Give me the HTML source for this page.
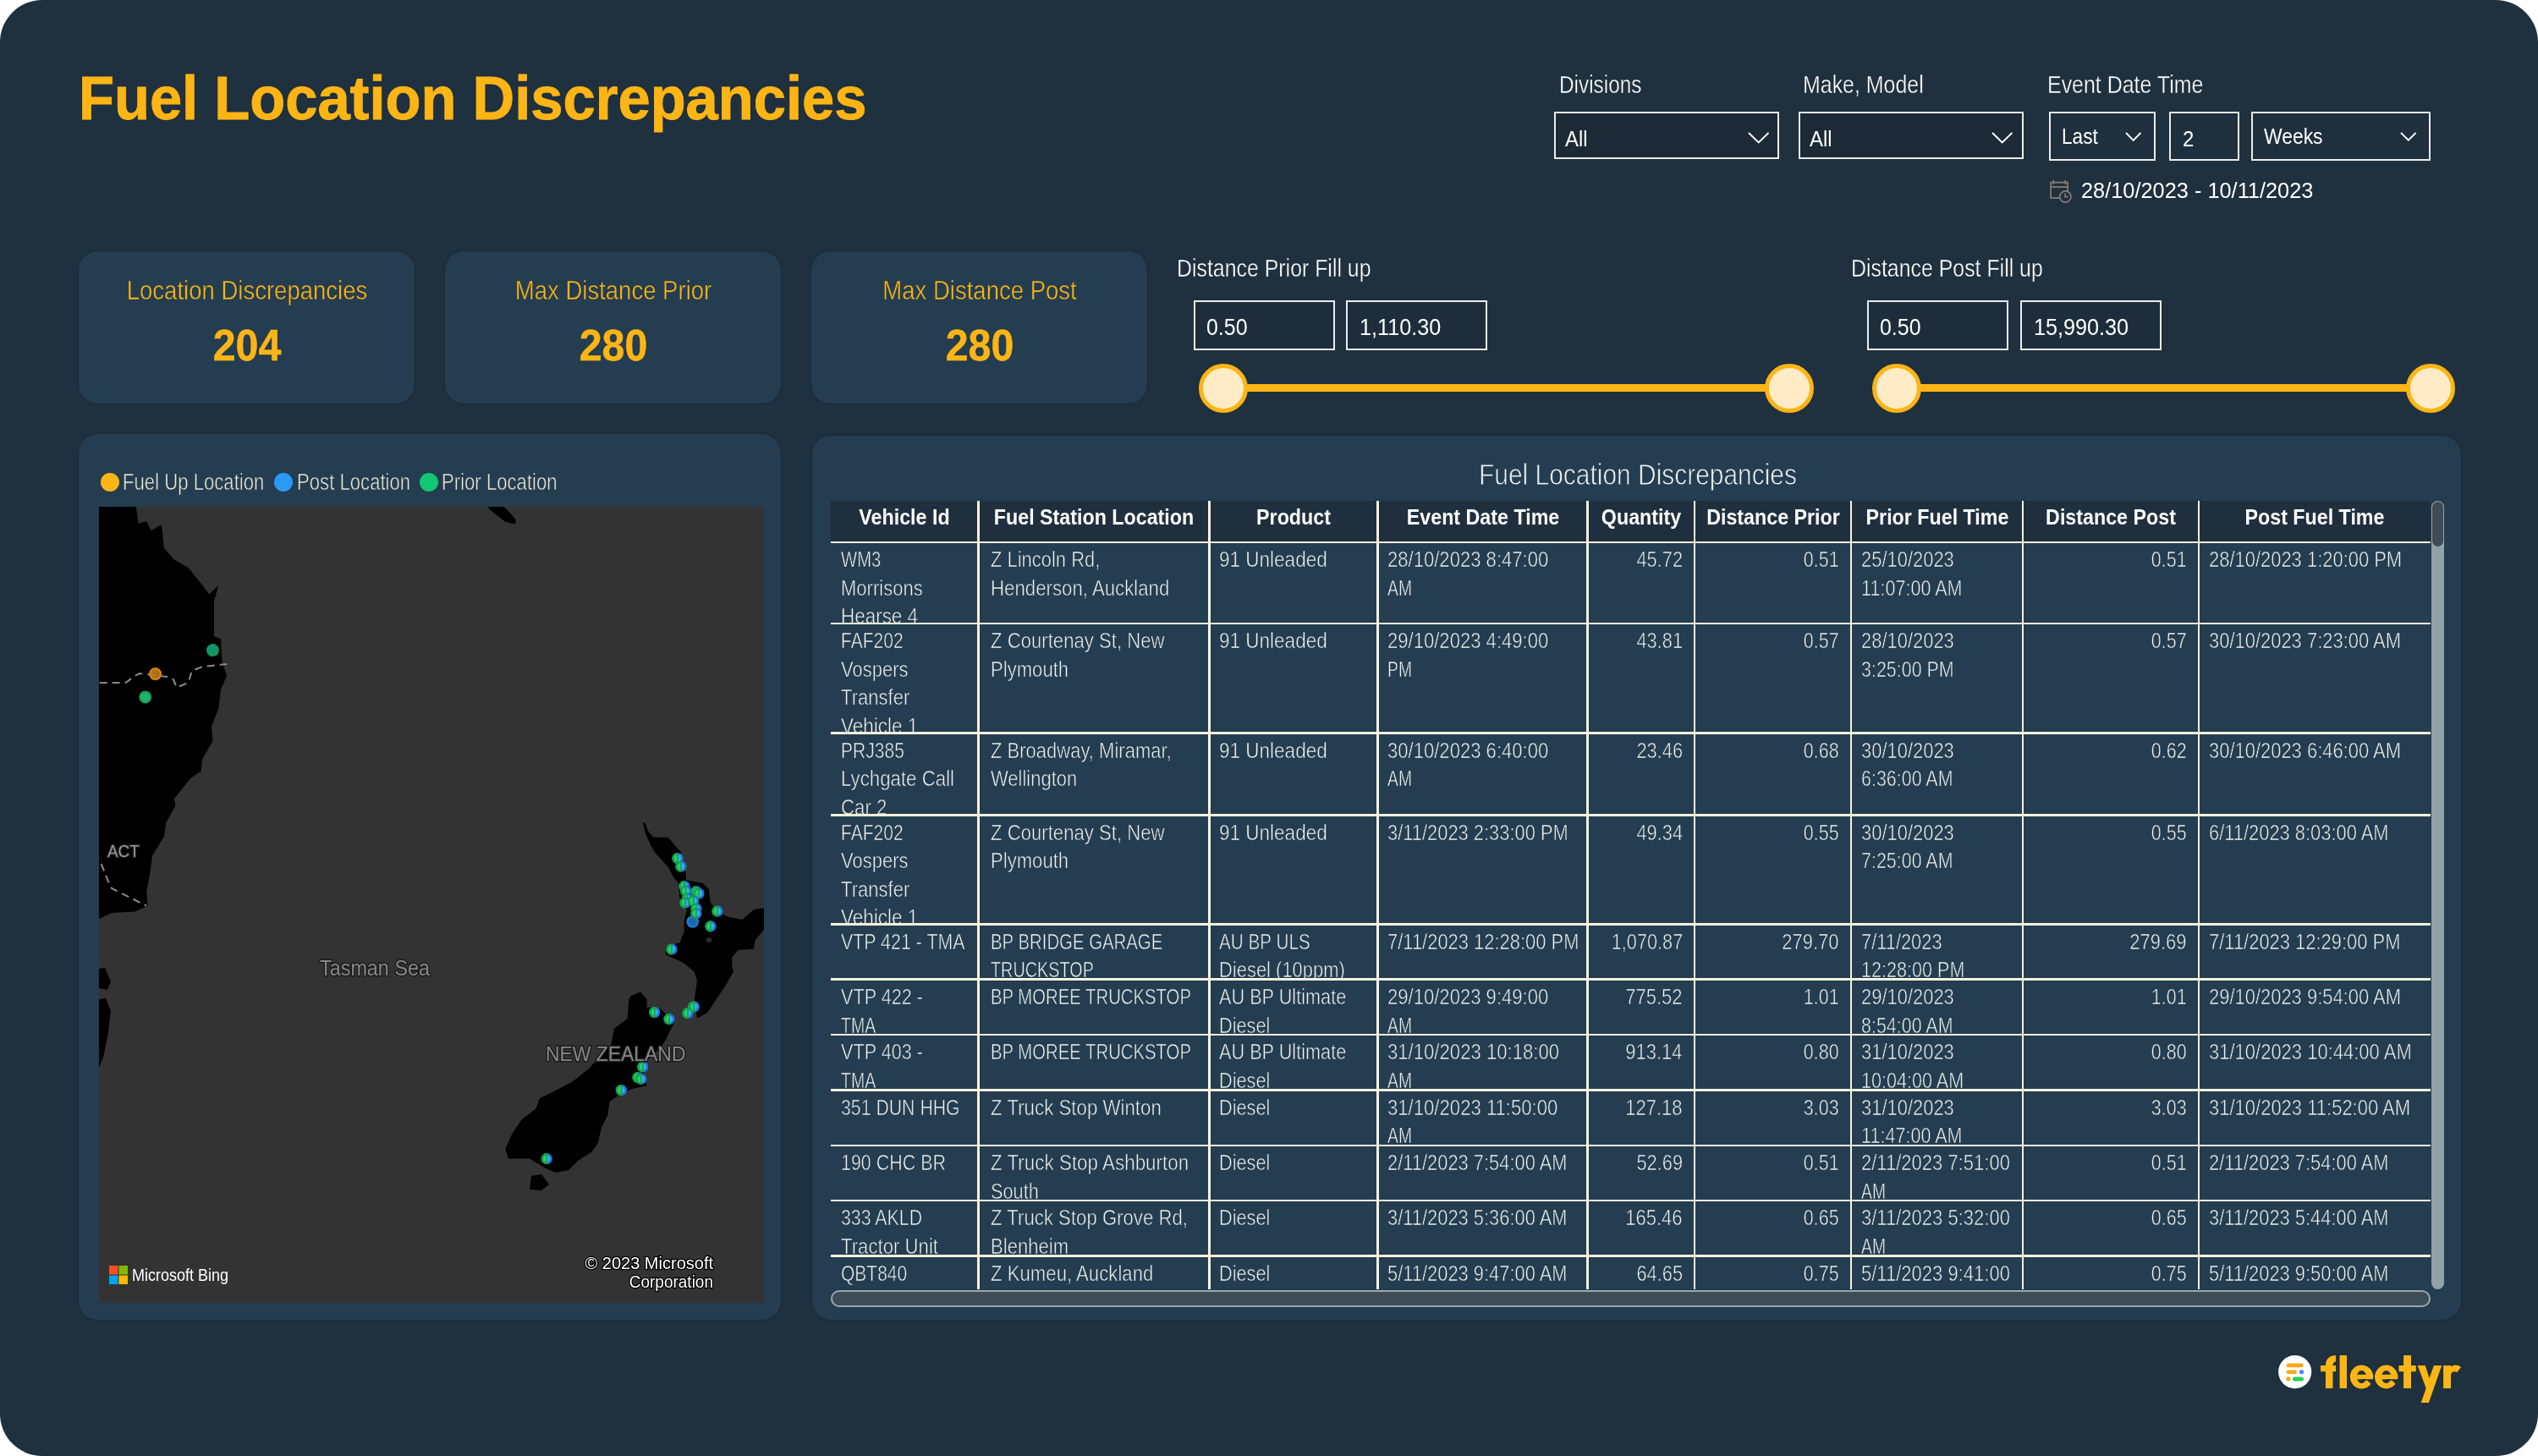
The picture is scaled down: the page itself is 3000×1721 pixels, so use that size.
<!DOCTYPE html>
<html><head><meta charset="utf-8"><title>Fuel Location Discrepancies</title>
<style>
html,body{margin:0;padding:0;background:#fff;}
body{width:3000px;height:1721px;overflow:hidden;position:relative;font-family:"Liberation Sans",sans-serif;}
#frame{position:absolute;left:0;top:0;width:3000px;height:1721px;background:#1f303e;border-radius:50px;overflow:hidden;will-change:transform;}
.t{position:absolute;white-space:nowrap;line-height:1;}
.abs{position:absolute;}
.box{position:absolute;box-sizing:border-box;border:2.5px solid #ececec;}
.card{position:absolute;background:#243d50;border-radius:22px;box-shadow:0 0 2px rgba(0,0,0,0.35);}
.knob{position:absolute;box-sizing:border-box;width:58px;height:58px;border-radius:50%;background:#ffebc6;border:5.5px solid #fdb515;}
</style></head><body><div id="frame">
<div class="t" style="left:93.0px;top:79.2px;font-size:73px;color:#fdb515;font-weight:bold;transform-origin:0 0;transform:scaleX(0.941);-webkit-text-stroke:0.9px #fdb515;">Fuel Location Discrepancies</div>
<div class="t" style="left:1843.0px;top:85.5px;font-size:29px;color:#fff;font-weight:normal;transform-origin:0 0;transform:scaleX(0.84);-webkit-text-stroke:0.4px #1f303e;">Divisions</div>
<div class="t" style="left:2131.0px;top:85.5px;font-size:29px;color:#fff;font-weight:normal;transform-origin:0 0;transform:scaleX(0.86);-webkit-text-stroke:0.4px #1f303e;">Make, Model</div>
<div class="t" style="left:2420.0px;top:85.5px;font-size:29px;color:#fff;font-weight:normal;transform-origin:0 0;transform:scaleX(0.86);-webkit-text-stroke:0.4px #1f303e;">Event Date Time</div>
<div class="box" style="left:1837px;top:132px;width:266px;height:56px;background:#1b2a36"></div>
<div class="box" style="left:2126px;top:132px;width:266px;height:56px;background:#1b2a36"></div>
<div class="box" style="left:2422px;top:132px;width:126px;height:58px;background:#1e2f3d"></div>
<div class="box" style="left:2564px;top:132px;width:83px;height:58px;background:#1e2f3d"></div>
<div class="box" style="left:2661px;top:132px;width:212px;height:58px;background:#1e2f3d"></div>
<div class="t" style="left:1850.0px;top:151.0px;font-size:26px;color:#fff;font-weight:normal;transform-origin:0 0;transform:scaleX(0.92);">All</div>
<div class="t" style="left:2139.0px;top:151.0px;font-size:26px;color:#fff;font-weight:normal;transform-origin:0 0;transform:scaleX(0.92);">All</div>
<div class="t" style="left:2437.0px;top:148.0px;font-size:26px;color:#fff;font-weight:normal;transform-origin:0 0;transform:scaleX(0.87);">Last</div>
<div class="t" style="left:2580.0px;top:151.0px;font-size:26px;color:#fff;font-weight:normal;transform-origin:0 0;transform:scaleX(0.92);">2</div>
<div class="t" style="left:2676.0px;top:148.0px;font-size:26px;color:#fff;font-weight:normal;transform-origin:0 0;transform:scaleX(0.88);">Weeks</div>
<svg class="abs" style="left:2062.5px;top:153px" width="31.5" height="19.5" viewBox="2062.5 153 31.5 19.5"><polyline points="2066.5,157 2078.25,168.5 2090,157" fill="none" stroke="#fff" stroke-width="1.9" stroke-linejoin="miter"/></svg>
<svg class="abs" style="left:2351.3px;top:153px" width="31.399999999999636" height="19.5" viewBox="2351.3 153 31.399999999999636 19.5"><polyline points="2355.3,157 2367.0,168.5 2378.7,157" fill="none" stroke="#fff" stroke-width="1.9" stroke-linejoin="miter"/></svg>
<svg class="abs" style="left:2509.2px;top:153px" width="25.40000000000009" height="16.80000000000001" viewBox="2509.2 153 25.40000000000009 16.80000000000001"><polyline points="2513.2,157 2521.8999999999996,165.8 2530.6,157" fill="none" stroke="#fff" stroke-width="1.9" stroke-linejoin="miter"/></svg>
<svg class="abs" style="left:2834px;top:153.3px" width="25.59999999999991" height="16.69999999999999" viewBox="2834 153.3 25.59999999999991 16.69999999999999"><polyline points="2838,157.3 2846.8,166 2855.6,157.3" fill="none" stroke="#fff" stroke-width="1.9" stroke-linejoin="miter"/></svg>
<svg class="abs" style="left:2410px;top:205px" width="45" height="40" viewBox="2410 205 45 40"><rect x="2424.1" y="215.7" width="20.05" height="18.3" fill="none" stroke="#857b73" stroke-width="1.8"/><line x1="2424.1" y1="221" x2="2444.15" y2="221" stroke="#857b73" stroke-width="1.8"/><line x1="2427.3" y1="213" x2="2427.3" y2="217.7" stroke="#857b73" stroke-width="1.8"/><line x1="2441.1" y1="213" x2="2441.1" y2="217.7" stroke="#857b73" stroke-width="1.8"/><circle cx="2441.3" cy="232.5" r="6.65" fill="#1f303e" stroke="#857b73" stroke-width="1.7"/><polyline points="2441.1,228.6 2441.1,232.7 2444.5,232.7" fill="none" stroke="#857b73" stroke-width="1.7"/></svg>
<div class="t" style="left:2460.0px;top:211.8px;font-size:26px;color:#fff;font-weight:normal;transform-origin:0 0;transform:scaleX(0.975);">28/10/2023 - 10/11/2023</div>
<div class="card" style="left:93px;top:297px;width:397px;height:180px"></div>
<div class="t" style="left:291.5px;top:327.4px;font-size:32px;color:#fdb515;font-weight:normal;transform-origin:50% 0;transform:translateX(-50%) scaleX(0.86);-webkit-text-stroke:0.5px #243d50;">Location Discrepancies</div>
<div class="t" style="left:291.5px;top:381.5px;font-size:52px;color:#fdb515;font-weight:bold;transform-origin:50% 0;transform:translateX(-50%) scaleX(0.93);-webkit-text-stroke:0.5px #fdb515;">204</div>
<div class="card" style="left:526px;top:297px;width:397px;height:180px"></div>
<div class="t" style="left:724.5px;top:327.4px;font-size:32px;color:#fdb515;font-weight:normal;transform-origin:50% 0;transform:translateX(-50%) scaleX(0.86);-webkit-text-stroke:0.5px #243d50;">Max Distance Prior</div>
<div class="t" style="left:724.5px;top:381.5px;font-size:52px;color:#fdb515;font-weight:bold;transform-origin:50% 0;transform:translateX(-50%) scaleX(0.93);-webkit-text-stroke:0.5px #fdb515;">280</div>
<div class="card" style="left:959px;top:297px;width:397px;height:180px"></div>
<div class="t" style="left:1157.5px;top:327.4px;font-size:32px;color:#fdb515;font-weight:normal;transform-origin:50% 0;transform:translateX(-50%) scaleX(0.86);-webkit-text-stroke:0.5px #243d50;">Max Distance Post</div>
<div class="t" style="left:1157.5px;top:381.5px;font-size:52px;color:#fdb515;font-weight:bold;transform-origin:50% 0;transform:translateX(-50%) scaleX(0.93);-webkit-text-stroke:0.5px #fdb515;">280</div>
<div class="t" style="left:1391.0px;top:302.5px;font-size:29px;color:#fff;font-weight:normal;transform-origin:0 0;transform:scaleX(0.858);-webkit-text-stroke:0.4px #1f303e;">Distance Prior Fill up</div><div class="box" style="left:1411px;top:355px;width:167px;height:59px;background:#1d2d3b"></div><div class="box" style="left:1591px;top:355px;width:167px;height:59px;background:#1d2d3b"></div><div class="t" style="left:1426.0px;top:372.6px;font-size:28px;color:#fff;font-weight:normal;transform-origin:0 0;transform:scaleX(0.89);">0.50</div><div class="t" style="left:1607.0px;top:372.6px;font-size:28px;color:#fff;font-weight:normal;transform-origin:0 0;transform:scaleX(0.9);">1,110.30</div><div class="abs" style="left:1446px;top:453.5px;width:668.5px;height:9px;background:#fdb515"></div><div class="knob" style="left:1417px;top:430px"></div><div class="knob" style="left:2085.5px;top:430px"></div>
<div class="t" style="left:2188.0px;top:302.5px;font-size:29px;color:#fff;font-weight:normal;transform-origin:0 0;transform:scaleX(0.858);-webkit-text-stroke:0.4px #1f303e;">Distance Post Fill up</div><div class="box" style="left:2207px;top:355px;width:167px;height:59px;background:#1d2d3b"></div><div class="box" style="left:2388px;top:355px;width:167px;height:59px;background:#1d2d3b"></div><div class="t" style="left:2222.0px;top:372.6px;font-size:28px;color:#fff;font-weight:normal;transform-origin:0 0;transform:scaleX(0.89);">0.50</div><div class="t" style="left:2404.0px;top:372.6px;font-size:28px;color:#fff;font-weight:normal;transform-origin:0 0;transform:scaleX(0.9);">15,990.30</div><div class="abs" style="left:2242px;top:453.5px;width:631px;height:9px;background:#fdb515"></div><div class="knob" style="left:2213px;top:430px"></div><div class="knob" style="left:2844px;top:430px"></div>
<div class="card" style="left:93px;top:513px;width:830px;height:1047px"></div>
<div class="abs" style="left:119px;top:559px;width:22px;height:22px;border-radius:50%;background:#fdb515"></div>
<div class="t" style="left:145.0px;top:557.1px;font-size:27px;color:#f3ead6;font-weight:normal;transform-origin:0 0;transform:scaleX(0.82);-webkit-text-stroke:0.6px #243d50;">Fuel Up Location</div>
<div class="abs" style="left:324px;top:559px;width:22px;height:22px;border-radius:50%;background:#2b9af3"></div>
<div class="t" style="left:351.0px;top:557.1px;font-size:27px;color:#f3ead6;font-weight:normal;transform-origin:0 0;transform:scaleX(0.82);-webkit-text-stroke:0.6px #243d50;">Post Location</div>
<div class="abs" style="left:496px;top:559px;width:22px;height:22px;border-radius:50%;background:#11c773"></div>
<div class="t" style="left:522.0px;top:557.1px;font-size:27px;color:#f3ead6;font-weight:normal;transform-origin:0 0;transform:scaleX(0.82);-webkit-text-stroke:0.6px #243d50;">Prior Location</div>
<svg class="abs" style="left:117px;top:599px" width="786" height="941" viewBox="117 599 786 941">
<rect x="117" y="599" width="786" height="941" fill="#333333"/>
<polygon fill="#000" points="117.0,599.0 160.8,599.0 163.6,618.8 173.0,616.0 178.7,627.0 191.0,620.0 193.8,647.7 206.0,661.4 222.6,671.0 239.0,691.6 247.4,702.6 258.4,691.6 252.9,711.0 252.9,752.0 261.0,755.0 262.5,782.0 268.0,798.8 261.0,815.0 258.4,837.0 250.0,859.0 251.5,875.7 239.0,897.7 237.7,911.4 225.4,919.7 206.0,944.0 207.5,952.6 196.5,971.9 193.8,990.0 192.4,991.0 180.0,1011.6 177.3,1032.2 173.2,1054.0 174.6,1070.7 159.5,1077.5 132.0,1079.0 117.0,1086.0"/>
<polygon fill="#000" points="576.6,599.0 595.5,599.0 603.0,606.3 609.4,613.9 609.4,619.0 605.6,619.0 596.7,616.4 590.4,611.4 580.4,603.8"/>
<polygon fill="#000" points="117.0,1145.0 124.0,1144.0 131.0,1160.0 127.0,1170.0 117.0,1168.0"/>
<polygon fill="#000" points="117.0,1181.0 125.0,1180.0 131.0,1195.0 128.0,1220.0 122.0,1250.0 117.0,1262.0"/>
<polygon fill="#000" points="762.0,972.0 766.0,982.0 772.0,989.5 790.0,990.0 801.0,1003.0 804.5,1006.0 807.0,1020.0 809.0,1028.0 810.5,1031.0 811.0,1040.0 813.8,1040.7 831.0,1044.0 837.9,1051.0 839.6,1066.5 849.9,1078.5 860.2,1083.6 877.4,1087.0 891.0,1075.0 903.0,1073.3 903.0,1099.0 892.8,1111.0 891.0,1121.4 872.2,1123.0 865.3,1131.7 865.3,1142.0 867.0,1148.9 856.8,1166.0 846.5,1181.5 836.2,1197.0 824.0,1203.8 820.7,1183.2 824.0,1159.2 820.7,1148.9 808.7,1138.6 798.4,1133.4 786.4,1128.3 788.0,1118.0 803.5,1114.5 808.7,1100.8 808.7,1087.0 812.0,1076.8 808.7,1068.0 803.5,1061.3 801.8,1044.1 795.0,1035.0 790.9,1026.3 781.0,1015.0 774.5,1008.2 769.0,999.0 763.0,985.0 760.0,973.0"/>
<polygon fill="#000" points="745.4,1177.3 757.0,1172.5 764.6,1181.0 764.6,1190.8 780.0,1191.7 797.3,1208.0 787.7,1227.3 782.0,1237.0 764.6,1254.0 760.8,1269.6 764.6,1283.0 747.3,1287.0 733.8,1292.7 720.4,1302.3 718.5,1317.7 710.8,1333.0 707.0,1350.4 699.0,1362.0 683.8,1371.5 672.3,1383.0 657.0,1386.0 645.4,1381.0 626.0,1369.6 601.0,1369.6 597.3,1358.0 605.0,1340.8 616.5,1323.5 633.8,1310.0 637.7,1298.5 657.0,1288.8 676.0,1279.0 695.4,1263.8 722.3,1235.0 726.0,1215.8 741.5,1204.0 743.5,1181.0"/>
<polygon fill="#000" points="628.0,1390.0 640.0,1388.0 649.0,1400.0 640.0,1407.0 626.0,1406.0"/>
<polyline fill="none" stroke="#8a8a8a" stroke-width="2" stroke-dasharray="9,6" points="117.7,807 148.5,807 159.5,798.8 165,796 198,800 204.8,803 209,812.5 222.6,807 226.8,793 239,788 268,785"/>
<polyline fill="none" stroke="#8a8a8a" stroke-width="2" stroke-dasharray="9,6" points="119.6,1021 123.7,1030.8 127.9,1041.8 132,1050 173.2,1070.7"/>
<circle cx="251.5" cy="768.6" r="6.5" fill="#1aa37a" stroke="#0f9a55" stroke-width="2" fill-opacity="0.9"/>
<circle cx="183.6" cy="796.6" r="6.5" fill="#c27b1c" stroke="#d98612" stroke-width="2" fill-opacity="0.9"/>
<circle cx="171.8" cy="824" r="6.5" fill="#21c47c" stroke="#12a050" stroke-width="2" fill-opacity="0.9"/>
<circle cx="818.75" cy="1089.5" r="6.2" fill="#1f68a8" stroke="#1a7fe0" stroke-width="2.2"/>
<circle cx="801" cy="1014.5" r="6.6" fill="#1878d8"/><path d="M801,1007.9 A6.6,6.6 0 0 0 801,1021.1 Z" fill="#16a53c"/><path d="M801,1010.3 A4.199999999999999,4.199999999999999 0 0 0 801,1018.7 Z" fill="#22d27a"/><path d="M801,1010.3 A4.199999999999999,4.199999999999999 0 0 1 801,1018.7 Z" fill="#3aaee6"/><rect x="800.2" y="1008.4" width="1.6" height="12.2" fill="#17a040"/>
<circle cx="805" cy="1024" r="6.6" fill="#1878d8"/><path d="M805,1017.4 A6.6,6.6 0 0 0 805,1030.6 Z" fill="#16a53c"/><path d="M805,1019.8 A4.199999999999999,4.199999999999999 0 0 0 805,1028.2 Z" fill="#22d27a"/><path d="M805,1019.8 A4.199999999999999,4.199999999999999 0 0 1 805,1028.2 Z" fill="#3aaee6"/><rect x="804.2" y="1017.9" width="1.6" height="12.2" fill="#17a040"/>
<circle cx="809" cy="1047.5" r="6.6" fill="#1878d8"/><path d="M809,1040.9 A6.6,6.6 0 0 0 809,1054.1 Z" fill="#16a53c"/><path d="M809,1043.3 A4.199999999999999,4.199999999999999 0 0 0 809,1051.7 Z" fill="#22d27a"/><path d="M809,1043.3 A4.199999999999999,4.199999999999999 0 0 1 809,1051.7 Z" fill="#3aaee6"/><rect x="808.2" y="1041.4" width="1.6" height="12.2" fill="#17a040"/>
<circle cx="810.7" cy="1053" r="6.6" fill="#1878d8"/><path d="M810.7,1046.4 A6.6,6.6 0 0 0 810.7,1059.6 Z" fill="#16a53c"/><path d="M810.7,1048.8 A4.199999999999999,4.199999999999999 0 0 0 810.7,1057.2 Z" fill="#22d27a"/><path d="M810.7,1048.8 A4.199999999999999,4.199999999999999 0 0 1 810.7,1057.2 Z" fill="#3aaee6"/><rect x="809.9000000000001" y="1046.9" width="1.6" height="12.2" fill="#17a040"/>
<circle cx="823" cy="1053.7" r="6.6" fill="#1878d8"/><path d="M823,1047.1000000000001 A6.6,6.6 0 0 0 823,1060.3 Z" fill="#16a53c"/><path d="M823,1049.5 A4.199999999999999,4.199999999999999 0 0 0 823,1057.9 Z" fill="#22d27a"/><path d="M823,1049.5 A4.199999999999999,4.199999999999999 0 0 1 823,1057.9 Z" fill="#3aaee6"/><rect x="822.2" y="1047.6000000000001" width="1.6" height="12.2" fill="#17a040"/>
<circle cx="826" cy="1056" r="6.6" fill="#1878d8"/><path d="M826,1049.4 A6.6,6.6 0 0 0 826,1062.6 Z" fill="#16a53c"/><path d="M826,1051.8 A4.199999999999999,4.199999999999999 0 0 0 826,1060.2 Z" fill="#22d27a"/><path d="M826,1051.8 A4.199999999999999,4.199999999999999 0 0 1 826,1060.2 Z" fill="#3aaee6"/><rect x="825.2" y="1049.9" width="1.6" height="12.2" fill="#17a040"/>
<circle cx="812.5" cy="1062" r="6.6" fill="#1878d8"/><path d="M812.5,1055.4 A6.6,6.6 0 0 0 812.5,1068.6 Z" fill="#16a53c"/><path d="M812.5,1057.8 A4.199999999999999,4.199999999999999 0 0 0 812.5,1066.2 Z" fill="#22d27a"/><path d="M812.5,1057.8 A4.199999999999999,4.199999999999999 0 0 1 812.5,1066.2 Z" fill="#3aaee6"/><rect x="811.7" y="1055.9" width="1.6" height="12.2" fill="#17a040"/>
<circle cx="810" cy="1067" r="6.6" fill="#1878d8"/><path d="M810,1060.4 A6.6,6.6 0 0 0 810,1073.6 Z" fill="#16a53c"/><path d="M810,1062.8 A4.199999999999999,4.199999999999999 0 0 0 810,1071.2 Z" fill="#22d27a"/><path d="M810,1062.8 A4.199999999999999,4.199999999999999 0 0 1 810,1071.2 Z" fill="#3aaee6"/><rect x="809.2" y="1060.9" width="1.6" height="12.2" fill="#17a040"/>
<circle cx="819.6" cy="1065" r="6.6" fill="#1878d8"/><path d="M819.6,1058.4 A6.6,6.6 0 0 0 819.6,1071.6 Z" fill="#16a53c"/><path d="M819.6,1060.8 A4.199999999999999,4.199999999999999 0 0 0 819.6,1069.2 Z" fill="#22d27a"/><path d="M819.6,1060.8 A4.199999999999999,4.199999999999999 0 0 1 819.6,1069.2 Z" fill="#3aaee6"/><rect x="818.8000000000001" y="1058.9" width="1.6" height="12.2" fill="#17a040"/>
<circle cx="823" cy="1074" r="6.6" fill="#1878d8"/><path d="M823,1067.4 A6.6,6.6 0 0 0 823,1080.6 Z" fill="#16a53c"/><path d="M823,1069.8 A4.199999999999999,4.199999999999999 0 0 0 823,1078.2 Z" fill="#22d27a"/><path d="M823,1069.8 A4.199999999999999,4.199999999999999 0 0 1 823,1078.2 Z" fill="#3aaee6"/><rect x="822.2" y="1067.9" width="1.6" height="12.2" fill="#17a040"/>
<circle cx="823" cy="1079.6" r="6.6" fill="#1878d8"/><path d="M823,1073.0 A6.6,6.6 0 0 0 823,1086.1999999999998 Z" fill="#16a53c"/><path d="M823,1075.3999999999999 A4.199999999999999,4.199999999999999 0 0 0 823,1083.8 Z" fill="#22d27a"/><path d="M823,1075.3999999999999 A4.199999999999999,4.199999999999999 0 0 1 823,1083.8 Z" fill="#3aaee6"/><rect x="822.2" y="1073.5" width="1.6" height="12.2" fill="#17a040"/>
<circle cx="848" cy="1077" r="6.6" fill="#1878d8"/><path d="M848,1070.4 A6.6,6.6 0 0 0 848,1083.6 Z" fill="#16a53c"/><path d="M848,1072.8 A4.199999999999999,4.199999999999999 0 0 0 848,1081.2 Z" fill="#22d27a"/><path d="M848,1072.8 A4.199999999999999,4.199999999999999 0 0 1 848,1081.2 Z" fill="#3aaee6"/><rect x="847.2" y="1070.9" width="1.6" height="12.2" fill="#17a040"/>
<circle cx="840" cy="1094.8" r="6.6" fill="#1878d8"/><path d="M840,1088.2 A6.6,6.6 0 0 0 840,1101.3999999999999 Z" fill="#16a53c"/><path d="M840,1090.6 A4.199999999999999,4.199999999999999 0 0 0 840,1099.0 Z" fill="#22d27a"/><path d="M840,1090.6 A4.199999999999999,4.199999999999999 0 0 1 840,1099.0 Z" fill="#3aaee6"/><rect x="839.2" y="1088.7" width="1.6" height="12.2" fill="#17a040"/>
<circle cx="794" cy="1122" r="6.6" fill="#1878d8"/><path d="M794,1115.4 A6.6,6.6 0 0 0 794,1128.6 Z" fill="#16a53c"/><path d="M794,1117.8 A4.199999999999999,4.199999999999999 0 0 0 794,1126.2 Z" fill="#22d27a"/><path d="M794,1117.8 A4.199999999999999,4.199999999999999 0 0 1 794,1126.2 Z" fill="#3aaee6"/><rect x="793.2" y="1115.9" width="1.6" height="12.2" fill="#17a040"/>
<circle cx="819.6" cy="1190" r="6.6" fill="#1878d8"/><path d="M819.6,1183.4 A6.6,6.6 0 0 0 819.6,1196.6 Z" fill="#16a53c"/><path d="M819.6,1185.8 A4.199999999999999,4.199999999999999 0 0 0 819.6,1194.2 Z" fill="#22d27a"/><path d="M819.6,1185.8 A4.199999999999999,4.199999999999999 0 0 1 819.6,1194.2 Z" fill="#3aaee6"/><rect x="818.8000000000001" y="1183.9" width="1.6" height="12.2" fill="#17a040"/>
<circle cx="813" cy="1197.5" r="6.6" fill="#1878d8"/><path d="M813,1190.9 A6.6,6.6 0 0 0 813,1204.1 Z" fill="#16a53c"/><path d="M813,1193.3 A4.199999999999999,4.199999999999999 0 0 0 813,1201.7 Z" fill="#22d27a"/><path d="M813,1193.3 A4.199999999999999,4.199999999999999 0 0 1 813,1201.7 Z" fill="#3aaee6"/><rect x="812.2" y="1191.4" width="1.6" height="12.2" fill="#17a040"/>
<circle cx="773.8" cy="1196.5" r="6.6" fill="#1878d8"/><path d="M773.8,1189.9 A6.6,6.6 0 0 0 773.8,1203.1 Z" fill="#16a53c"/><path d="M773.8,1192.3 A4.199999999999999,4.199999999999999 0 0 0 773.8,1200.7 Z" fill="#22d27a"/><path d="M773.8,1192.3 A4.199999999999999,4.199999999999999 0 0 1 773.8,1200.7 Z" fill="#3aaee6"/><rect x="773.0" y="1190.4" width="1.6" height="12.2" fill="#17a040"/>
<circle cx="791" cy="1204.6" r="6.6" fill="#1878d8"/><path d="M791,1198.0 A6.6,6.6 0 0 0 791,1211.1999999999998 Z" fill="#16a53c"/><path d="M791,1200.3999999999999 A4.199999999999999,4.199999999999999 0 0 0 791,1208.8 Z" fill="#22d27a"/><path d="M791,1200.3999999999999 A4.199999999999999,4.199999999999999 0 0 1 791,1208.8 Z" fill="#3aaee6"/><rect x="790.2" y="1198.5" width="1.6" height="12.2" fill="#17a040"/>
<circle cx="820.4" cy="1189.8" r="6.6" fill="#1878d8"/><path d="M820.4,1183.2 A6.6,6.6 0 0 0 820.4,1196.3999999999999 Z" fill="#16a53c"/><path d="M820.4,1185.6 A4.199999999999999,4.199999999999999 0 0 0 820.4,1194.0 Z" fill="#22d27a"/><path d="M820.4,1185.6 A4.199999999999999,4.199999999999999 0 0 1 820.4,1194.0 Z" fill="#3aaee6"/><rect x="819.6" y="1183.7" width="1.6" height="12.2" fill="#17a040"/>
<circle cx="759.8" cy="1261" r="6.6" fill="#1878d8"/><path d="M759.8,1254.4 A6.6,6.6 0 0 0 759.8,1267.6 Z" fill="#16a53c"/><path d="M759.8,1256.8 A4.199999999999999,4.199999999999999 0 0 0 759.8,1265.2 Z" fill="#22d27a"/><path d="M759.8,1256.8 A4.199999999999999,4.199999999999999 0 0 1 759.8,1265.2 Z" fill="#3aaee6"/><rect x="759.0" y="1254.9" width="1.6" height="12.2" fill="#17a040"/>
<circle cx="754" cy="1273.5" r="6.6" fill="#1878d8"/><path d="M754,1266.9 A6.6,6.6 0 0 0 754,1280.1 Z" fill="#16a53c"/><path d="M754,1269.3 A4.199999999999999,4.199999999999999 0 0 0 754,1277.7 Z" fill="#22d27a"/><path d="M754,1269.3 A4.199999999999999,4.199999999999999 0 0 1 754,1277.7 Z" fill="#3aaee6"/><rect x="753.2" y="1267.4" width="1.6" height="12.2" fill="#17a040"/>
<circle cx="757.9" cy="1275.4" r="6.6" fill="#1878d8"/><path d="M757.9,1268.8000000000002 A6.6,6.6 0 0 0 757.9,1282.0 Z" fill="#16a53c"/><path d="M757.9,1271.2 A4.199999999999999,4.199999999999999 0 0 0 757.9,1279.6000000000001 Z" fill="#22d27a"/><path d="M757.9,1271.2 A4.199999999999999,4.199999999999999 0 0 1 757.9,1279.6000000000001 Z" fill="#3aaee6"/><rect x="757.1" y="1269.3000000000002" width="1.6" height="12.2" fill="#17a040"/>
<circle cx="734.4" cy="1288.5" r="6.6" fill="#1878d8"/><path d="M734.4,1281.9 A6.6,6.6 0 0 0 734.4,1295.1 Z" fill="#16a53c"/><path d="M734.4,1284.3 A4.199999999999999,4.199999999999999 0 0 0 734.4,1292.7 Z" fill="#22d27a"/><path d="M734.4,1284.3 A4.199999999999999,4.199999999999999 0 0 1 734.4,1292.7 Z" fill="#3aaee6"/><rect x="733.6" y="1282.4" width="1.6" height="12.2" fill="#17a040"/>
<circle cx="646.3" cy="1369.6" r="6.6" fill="#1878d8"/><path d="M646.3,1363.0 A6.6,6.6 0 0 0 646.3,1376.1999999999998 Z" fill="#16a53c"/><path d="M646.3,1365.3999999999999 A4.199999999999999,4.199999999999999 0 0 0 646.3,1373.8 Z" fill="#22d27a"/><path d="M646.3,1365.3999999999999 A4.199999999999999,4.199999999999999 0 0 1 646.3,1373.8 Z" fill="#3aaee6"/><rect x="645.5" y="1363.5" width="1.6" height="12.2" fill="#17a040"/>
<ellipse cx="838" cy="1111" rx="3.5" ry="3" fill="#2a2a2a"/>
<text x="127" y="1013" font-family="Liberation Sans" font-size="21" fill="#9a9a9a" stroke="#1c1c1c" stroke-width="3" paint-order="stroke" transform="translate(127,0) scale(0.9,1) translate(-127,0)">ACT</text>
<text x="378" y="1153" font-family="Liberation Sans" font-size="26" fill="#868686" stroke="#1c1c1c" stroke-width="3" paint-order="stroke" transform="translate(378,0) scale(0.9,1) translate(-378,0)">Tasman Sea</text>
<text x="645" y="1254" font-family="Liberation Sans" font-size="24" fill="#868686" stroke="#1c1c1c" stroke-width="3" paint-order="stroke" transform="translate(645,0) scale(0.955,1) translate(-645,0)">NEW ZEALAND</text>
<rect x="129" y="1496" width="10.5" height="10.5" fill="#f25022"/><rect x="140.5" y="1496" width="10.5" height="10.5" fill="#7fba00"/><rect x="129" y="1507.5" width="10.5" height="10.5" fill="#00a4ef"/><rect x="140.5" y="1507.5" width="10.5" height="10.5" fill="#ffb900"/>
<text x="156" y="1514" font-family="Liberation Sans" font-size="20" fill="#fff" transform="translate(156,0) scale(0.9,1) translate(-156,0)">Microsoft Bing</text>
<text x="843" y="1500" text-anchor="end" font-family="Liberation Sans" font-size="20" fill="#fff" stroke="#000" stroke-width="2.5" paint-order="stroke" transform="translate(843,0) scale(1.0,1) translate(-843,0)">© 2023 Microsoft</text>
<text x="843" y="1522" text-anchor="end" font-family="Liberation Sans" font-size="20" fill="#fff" stroke="#000" stroke-width="2.5" paint-order="stroke" transform="translate(843,0) scale(0.95,1) translate(-843,0)">Corporation</text>
</svg>
<div class="card" style="left:960px;top:515px;width:1949px;height:1045px"></div>
<div class="t" style="left:1935.5px;top:542.9px;font-size:35px;color:#f0f2f4;font-weight:normal;transform-origin:50% 0;transform:translateX(-50%) scaleX(0.855);-webkit-text-stroke:0.8px #243d50;">Fuel Location Discrepancies</div>
<style>
.row{position:absolute;left:0;width:3000px;overflow:hidden;}
.row .c{position:absolute;white-space:nowrap;font-size:26px;line-height:1;color:#f2f2ee;transform-origin:0 0;-webkit-text-stroke:0.6px #243d50;}
</style><div class="abs" style="left:982px;top:592px;width:1891px;height:49px;background:#1f2f3e"></div>
<div class="t" style="left:1069.2px;top:598.8px;font-size:25px;font-weight:bold;color:#fff;transform-origin:50% 0;transform:translateX(-50%) scaleX(0.93)">Vehicle Id</div>
<div class="t" style="left:1293.0px;top:598.8px;font-size:25px;font-weight:bold;color:#fff;transform-origin:50% 0;transform:translateX(-50%) scaleX(0.93)">Fuel Station Location</div>
<div class="t" style="left:1529.0px;top:598.8px;font-size:25px;font-weight:bold;color:#fff;transform-origin:50% 0;transform:translateX(-50%) scaleX(0.93)">Product</div>
<div class="t" style="left:1752.5px;top:598.8px;font-size:25px;font-weight:bold;color:#fff;transform-origin:50% 0;transform:translateX(-50%) scaleX(0.93)">Event Date Time</div>
<div class="t" style="left:1939.8px;top:598.8px;font-size:25px;font-weight:bold;color:#fff;transform-origin:50% 0;transform:translateX(-50%) scaleX(0.93)">Quantity</div>
<div class="t" style="left:2095.5px;top:598.8px;font-size:25px;font-weight:bold;color:#fff;transform-origin:50% 0;transform:translateX(-50%) scaleX(0.93)">Distance Prior</div>
<div class="t" style="left:2289.5px;top:598.8px;font-size:25px;font-weight:bold;color:#fff;transform-origin:50% 0;transform:translateX(-50%) scaleX(0.93)">Prior Fuel Time</div>
<div class="t" style="left:2495.0px;top:598.8px;font-size:25px;font-weight:bold;color:#fff;transform-origin:50% 0;transform:translateX(-50%) scaleX(0.93)">Distance Post</div>
<div class="t" style="left:2736.0px;top:598.8px;font-size:25px;font-weight:bold;color:#fff;transform-origin:50% 0;transform:translateX(-50%) scaleX(0.93)">Post Fuel Time</div>
<div class="row" style="top:642.2px;height:93.5px"><div class="c" style="left:993.8px;top:6.2px;transform:scaleX(0.780)">WM3</div><div class="c" style="left:993.8px;top:39.7px;transform:scaleX(0.847)">Morrisons</div><div class="c" style="left:993.8px;top:73.2px;transform:scaleX(0.863)">Hearse 4</div><div class="c" style="left:1170.8px;top:6.2px;transform:scaleX(0.844)">Z Lincoln Rd,</div><div class="c" style="left:1170.8px;top:39.7px;transform:scaleX(0.855)">Henderson, Auckland</div><div class="c" style="left:1441.2px;top:6.2px;transform:scaleX(0.866)">91 Unleaded</div><div class="c" style="left:1640.2px;top:6.2px;transform:scaleX(0.849)">28/10/2023 8:47:00</div><div class="c" style="left:1640.2px;top:39.7px;transform:scaleX(0.744)">AM</div><div class="c" style="right:1011.2px;top:6.2px;transform-origin:100% 0;transform:scaleX(0.839)">45.72</div><div class="c" style="right:826.2px;top:6.2px;transform-origin:100% 0;transform:scaleX(0.828)">0.51</div><div class="c" style="left:2199.8px;top:6.2px;transform:scaleX(0.844)">25/10/2023</div><div class="c" style="left:2199.8px;top:39.7px;transform:scaleX(0.830)">11:07:00 AM</div><div class="c" style="right:415.2px;top:6.2px;transform-origin:100% 0;transform:scaleX(0.828)">0.51</div><div class="c" style="left:2610.8px;top:6.2px;transform:scaleX(0.844)">28/10/2023 1:20:00 PM</div></div>
<div class="row" style="top:738.2px;height:127.0px"><div class="c" style="left:993.8px;top:6.2px;transform:scaleX(0.810)">FAF202</div><div class="c" style="left:993.8px;top:39.7px;transform:scaleX(0.847)">Vospers</div><div class="c" style="left:993.8px;top:73.2px;transform:scaleX(0.849)">Transfer</div><div class="c" style="left:993.8px;top:106.7px;transform:scaleX(0.865)">Vehicle 1</div><div class="c" style="left:1170.8px;top:6.2px;transform:scaleX(0.852)">Z Courtenay St, New</div><div class="c" style="left:1170.8px;top:39.7px;transform:scaleX(0.850)">Plymouth</div><div class="c" style="left:1441.2px;top:6.2px;transform:scaleX(0.866)">91 Unleaded</div><div class="c" style="left:1640.2px;top:6.2px;transform:scaleX(0.849)">29/10/2023 4:49:00</div><div class="c" style="left:1640.2px;top:39.7px;transform:scaleX(0.744)">PM</div><div class="c" style="right:1011.2px;top:6.2px;transform-origin:100% 0;transform:scaleX(0.839)">43.81</div><div class="c" style="right:826.2px;top:6.2px;transform-origin:100% 0;transform:scaleX(0.828)">0.57</div><div class="c" style="left:2199.8px;top:6.2px;transform:scaleX(0.844)">28/10/2023</div><div class="c" style="left:2199.8px;top:39.7px;transform:scaleX(0.825)">3:25:00 PM</div><div class="c" style="right:415.2px;top:6.2px;transform-origin:100% 0;transform:scaleX(0.828)">0.57</div><div class="c" style="left:2610.8px;top:6.2px;transform:scaleX(0.844)">30/10/2023 7:23:00 AM</div></div>
<div class="row" style="top:867.8px;height:94.5px"><div class="c" style="left:993.8px;top:6.2px;transform:scaleX(0.810)">PRJ385</div><div class="c" style="left:993.8px;top:39.7px;transform:scaleX(0.856)">Lychgate Call</div><div class="c" style="left:993.8px;top:73.2px;transform:scaleX(0.856)">Car 2</div><div class="c" style="left:1170.8px;top:6.2px;transform:scaleX(0.847)">Z Broadway, Miramar,</div><div class="c" style="left:1170.8px;top:39.7px;transform:scaleX(0.846)">Wellington</div><div class="c" style="left:1441.2px;top:6.2px;transform:scaleX(0.866)">91 Unleaded</div><div class="c" style="left:1640.2px;top:6.2px;transform:scaleX(0.849)">30/10/2023 6:40:00</div><div class="c" style="left:1640.2px;top:39.7px;transform:scaleX(0.744)">AM</div><div class="c" style="right:1011.2px;top:6.2px;transform-origin:100% 0;transform:scaleX(0.839)">23.46</div><div class="c" style="right:826.2px;top:6.2px;transform-origin:100% 0;transform:scaleX(0.828)">0.68</div><div class="c" style="left:2199.8px;top:6.2px;transform:scaleX(0.844)">30/10/2023</div><div class="c" style="left:2199.8px;top:39.7px;transform:scaleX(0.825)">6:36:00 AM</div><div class="c" style="right:415.2px;top:6.2px;transform-origin:100% 0;transform:scaleX(0.828)">0.62</div><div class="c" style="left:2610.8px;top:6.2px;transform:scaleX(0.844)">30/10/2023 6:46:00 AM</div></div>
<div class="row" style="top:964.8px;height:126.3px"><div class="c" style="left:993.8px;top:6.2px;transform:scaleX(0.810)">FAF202</div><div class="c" style="left:993.8px;top:39.7px;transform:scaleX(0.847)">Vospers</div><div class="c" style="left:993.8px;top:73.2px;transform:scaleX(0.849)">Transfer</div><div class="c" style="left:993.8px;top:106.7px;transform:scaleX(0.865)">Vehicle 1</div><div class="c" style="left:1170.8px;top:6.2px;transform:scaleX(0.852)">Z Courtenay St, New</div><div class="c" style="left:1170.8px;top:39.7px;transform:scaleX(0.850)">Plymouth</div><div class="c" style="left:1441.2px;top:6.2px;transform:scaleX(0.866)">91 Unleaded</div><div class="c" style="left:1640.2px;top:6.2px;transform:scaleX(0.842)">3/11/2023 2:33:00 PM</div><div class="c" style="right:1011.2px;top:6.2px;transform-origin:100% 0;transform:scaleX(0.839)">49.34</div><div class="c" style="right:826.2px;top:6.2px;transform-origin:100% 0;transform:scaleX(0.828)">0.55</div><div class="c" style="left:2199.8px;top:6.2px;transform:scaleX(0.844)">30/10/2023</div><div class="c" style="left:2199.8px;top:39.7px;transform:scaleX(0.825)">7:25:00 AM</div><div class="c" style="right:415.2px;top:6.2px;transform-origin:100% 0;transform:scaleX(0.828)">0.55</div><div class="c" style="left:2610.8px;top:6.2px;transform:scaleX(0.842)">6/11/2023 8:03:00 AM</div></div>
<div class="row" style="top:1093.5px;height:62.9px"><div class="c" style="left:993.8px;top:6.2px;transform:scaleX(0.822)">VTP 421 - TMA</div><div class="c" style="left:1170.8px;top:6.2px;transform:scaleX(0.783)">BP BRIDGE GARAGE</div><div class="c" style="left:1170.8px;top:39.7px;transform:scaleX(0.763)">TRUCKSTOP</div><div class="c" style="left:1441.2px;top:6.2px;transform:scaleX(0.796)">AU BP ULS</div><div class="c" style="left:1441.2px;top:39.7px;transform:scaleX(0.844)">Diesel (10ppm)</div><div class="c" style="left:1640.2px;top:6.2px;transform:scaleX(0.844)">7/11/2023 12:28:00 PM</div><div class="c" style="right:1011.2px;top:6.2px;transform-origin:100% 0;transform:scaleX(0.835)">1,070.87</div><div class="c" style="right:826.2px;top:6.2px;transform-origin:100% 0;transform:scaleX(0.846)">279.70</div><div class="c" style="left:2199.8px;top:6.2px;transform:scaleX(0.840)">7/11/2023</div><div class="c" style="left:2199.8px;top:39.7px;transform:scaleX(0.830)">12:28:00 PM</div><div class="c" style="right:415.2px;top:6.2px;transform-origin:100% 0;transform:scaleX(0.846)">279.69</div><div class="c" style="left:2610.8px;top:6.2px;transform:scaleX(0.844)">7/11/2023 12:29:00 PM</div></div>
<div class="row" style="top:1159.0px;height:62.6px"><div class="c" style="left:993.8px;top:6.2px;transform:scaleX(0.832)">VTP 422 -</div><div class="c" style="left:993.8px;top:39.7px;transform:scaleX(0.751)">TMA</div><div class="c" style="left:1170.8px;top:6.2px;transform:scaleX(0.781)">BP MOREE TRUCKSTOP</div><div class="c" style="left:1441.2px;top:6.2px;transform:scaleX(0.834)">AU BP Ultimate</div><div class="c" style="left:1441.2px;top:39.7px;transform:scaleX(0.836)">Diesel</div><div class="c" style="left:1640.2px;top:6.2px;transform:scaleX(0.849)">29/10/2023 9:49:00</div><div class="c" style="left:1640.2px;top:39.7px;transform:scaleX(0.744)">AM</div><div class="c" style="right:1011.2px;top:6.2px;transform-origin:100% 0;transform:scaleX(0.846)">775.52</div><div class="c" style="right:826.2px;top:6.2px;transform-origin:100% 0;transform:scaleX(0.828)">1.01</div><div class="c" style="left:2199.8px;top:6.2px;transform:scaleX(0.844)">29/10/2023</div><div class="c" style="left:2199.8px;top:39.7px;transform:scaleX(0.825)">8:54:00 AM</div><div class="c" style="right:415.2px;top:6.2px;transform-origin:100% 0;transform:scaleX(0.828)">1.01</div><div class="c" style="left:2610.8px;top:6.2px;transform:scaleX(0.844)">29/10/2023 9:54:00 AM</div></div>
<div class="row" style="top:1224.0px;height:63.2px"><div class="c" style="left:993.8px;top:6.2px;transform:scaleX(0.832)">VTP 403 -</div><div class="c" style="left:993.8px;top:39.7px;transform:scaleX(0.751)">TMA</div><div class="c" style="left:1170.8px;top:6.2px;transform:scaleX(0.781)">BP MOREE TRUCKSTOP</div><div class="c" style="left:1441.2px;top:6.2px;transform:scaleX(0.834)">AU BP Ultimate</div><div class="c" style="left:1441.2px;top:39.7px;transform:scaleX(0.836)">Diesel</div><div class="c" style="left:1640.2px;top:6.2px;transform:scaleX(0.851)">31/10/2023 10:18:00</div><div class="c" style="left:1640.2px;top:39.7px;transform:scaleX(0.744)">AM</div><div class="c" style="right:1011.2px;top:6.2px;transform-origin:100% 0;transform:scaleX(0.846)">913.14</div><div class="c" style="right:826.2px;top:6.2px;transform-origin:100% 0;transform:scaleX(0.828)">0.80</div><div class="c" style="left:2199.8px;top:6.2px;transform:scaleX(0.844)">31/10/2023</div><div class="c" style="left:2199.8px;top:39.7px;transform:scaleX(0.830)">10:04:00 AM</div><div class="c" style="right:415.2px;top:6.2px;transform-origin:100% 0;transform:scaleX(0.828)">0.80</div><div class="c" style="left:2610.8px;top:6.2px;transform:scaleX(0.846)">31/10/2023 10:44:00 AM</div></div>
<div class="row" style="top:1289.8px;height:63.0px"><div class="c" style="left:993.8px;top:6.2px;transform:scaleX(0.818)">351 DUN HHG</div><div class="c" style="left:1170.8px;top:6.2px;transform:scaleX(0.857)">Z Truck Stop Winton</div><div class="c" style="left:1441.2px;top:6.2px;transform:scaleX(0.836)">Diesel</div><div class="c" style="left:1640.2px;top:6.2px;transform:scaleX(0.851)">31/10/2023 11:50:00</div><div class="c" style="left:1640.2px;top:39.7px;transform:scaleX(0.744)">AM</div><div class="c" style="right:1011.2px;top:6.2px;transform-origin:100% 0;transform:scaleX(0.846)">127.18</div><div class="c" style="right:826.2px;top:6.2px;transform-origin:100% 0;transform:scaleX(0.828)">3.03</div><div class="c" style="left:2199.8px;top:6.2px;transform:scaleX(0.844)">31/10/2023</div><div class="c" style="left:2199.8px;top:39.7px;transform:scaleX(0.830)">11:47:00 AM</div><div class="c" style="right:415.2px;top:6.2px;transform-origin:100% 0;transform:scaleX(0.828)">3.03</div><div class="c" style="left:2610.8px;top:6.2px;transform:scaleX(0.846)">31/10/2023 11:52:00 AM</div></div>
<div class="row" style="top:1355.2px;height:62.5px"><div class="c" style="left:993.8px;top:6.2px;transform:scaleX(0.825)">190 CHC BR</div><div class="c" style="left:1170.8px;top:6.2px;transform:scaleX(0.862)">Z Truck Stop Ashburton</div><div class="c" style="left:1170.8px;top:39.7px;transform:scaleX(0.836)">South</div><div class="c" style="left:1441.2px;top:6.2px;transform:scaleX(0.836)">Diesel</div><div class="c" style="left:1640.2px;top:6.2px;transform:scaleX(0.842)">2/11/2023 7:54:00 AM</div><div class="c" style="right:1011.2px;top:6.2px;transform-origin:100% 0;transform:scaleX(0.839)">52.69</div><div class="c" style="right:826.2px;top:6.2px;transform-origin:100% 0;transform:scaleX(0.828)">0.51</div><div class="c" style="left:2199.8px;top:6.2px;transform:scaleX(0.847)">2/11/2023 7:51:00</div><div class="c" style="left:2199.8px;top:39.7px;transform:scaleX(0.744)">AM</div><div class="c" style="right:415.2px;top:6.2px;transform-origin:100% 0;transform:scaleX(0.828)">0.51</div><div class="c" style="left:2610.8px;top:6.2px;transform:scaleX(0.842)">2/11/2023 7:54:00 AM</div></div>
<div class="row" style="top:1420.2px;height:62.8px"><div class="c" style="left:993.8px;top:6.2px;transform:scaleX(0.821)">333 AKLD</div><div class="c" style="left:993.8px;top:39.7px;transform:scaleX(0.853)">Tractor Unit</div><div class="c" style="left:1170.8px;top:6.2px;transform:scaleX(0.853)">Z Truck Stop Grove Rd,</div><div class="c" style="left:1170.8px;top:39.7px;transform:scaleX(0.850)">Blenheim</div><div class="c" style="left:1441.2px;top:6.2px;transform:scaleX(0.836)">Diesel</div><div class="c" style="left:1640.2px;top:6.2px;transform:scaleX(0.842)">3/11/2023 5:36:00 AM</div><div class="c" style="right:1011.2px;top:6.2px;transform-origin:100% 0;transform:scaleX(0.846)">165.46</div><div class="c" style="right:826.2px;top:6.2px;transform-origin:100% 0;transform:scaleX(0.828)">0.65</div><div class="c" style="left:2199.8px;top:6.2px;transform:scaleX(0.847)">3/11/2023 5:32:00</div><div class="c" style="left:2199.8px;top:39.7px;transform:scaleX(0.744)">AM</div><div class="c" style="right:415.2px;top:6.2px;transform-origin:100% 0;transform:scaleX(0.828)">0.65</div><div class="c" style="left:2610.8px;top:6.2px;transform:scaleX(0.842)">3/11/2023 5:44:00 AM</div></div>
<div class="row" style="top:1485.5px;height:37.2px"><div class="c" style="left:993.8px;top:6.2px;transform:scaleX(0.808)">QBT840</div><div class="c" style="left:1170.8px;top:6.2px;transform:scaleX(0.853)">Z Kumeu, Auckland</div><div class="c" style="left:1441.2px;top:6.2px;transform:scaleX(0.836)">Diesel</div><div class="c" style="left:1640.2px;top:6.2px;transform:scaleX(0.842)">5/11/2023 9:47:00 AM</div><div class="c" style="right:1011.2px;top:6.2px;transform-origin:100% 0;transform:scaleX(0.839)">64.65</div><div class="c" style="right:826.2px;top:6.2px;transform-origin:100% 0;transform:scaleX(0.828)">0.75</div><div class="c" style="left:2199.8px;top:6.2px;transform:scaleX(0.847)">5/11/2023 9:41:00</div><div class="c" style="right:415.2px;top:6.2px;transform-origin:100% 0;transform:scaleX(0.828)">0.75</div><div class="c" style="left:2610.8px;top:6.2px;transform:scaleX(0.842)">5/11/2023 9:50:00 AM</div></div>
<div class="abs" style="left:982px;top:639.75px;width:1891px;height:2.5px;background:#f8f2de"></div>
<div class="abs" style="left:982px;top:735.75px;width:1891px;height:2.5px;background:#f8f2de"></div>
<div class="abs" style="left:982px;top:865.25px;width:1891px;height:2.5px;background:#f8f2de"></div>
<div class="abs" style="left:982px;top:962.25px;width:1891px;height:2.5px;background:#f8f2de"></div>
<div class="abs" style="left:982px;top:1091.05px;width:1891px;height:2.5px;background:#f8f2de"></div>
<div class="abs" style="left:982px;top:1156.45px;width:1891px;height:2.5px;background:#f8f2de"></div>
<div class="abs" style="left:982px;top:1221.55px;width:1891px;height:2.5px;background:#f8f2de"></div>
<div class="abs" style="left:982px;top:1287.25px;width:1891px;height:2.5px;background:#f8f2de"></div>
<div class="abs" style="left:982px;top:1352.75px;width:1891px;height:2.5px;background:#f8f2de"></div>
<div class="abs" style="left:982px;top:1417.75px;width:1891px;height:2.5px;background:#f8f2de"></div>
<div class="abs" style="left:982px;top:1483.05px;width:1891px;height:2.5px;background:#f8f2de"></div>
<div class="abs" style="left:1155.25px;top:592px;width:2.5px;height:932px;background:#f8f2de"></div>
<div class="abs" style="left:1428.25px;top:592px;width:2.5px;height:932px;background:#f8f2de"></div>
<div class="abs" style="left:1627.25px;top:592px;width:2.5px;height:932px;background:#f8f2de"></div>
<div class="abs" style="left:1875.25px;top:592px;width:2.5px;height:932px;background:#f8f2de"></div>
<div class="abs" style="left:2001.75px;top:592px;width:2.5px;height:932px;background:#f8f2de"></div>
<div class="abs" style="left:2186.75px;top:592px;width:2.5px;height:932px;background:#f8f2de"></div>
<div class="abs" style="left:2389.75px;top:592px;width:2.5px;height:932px;background:#f8f2de"></div>
<div class="abs" style="left:2597.75px;top:592px;width:2.5px;height:932px;background:#f8f2de"></div>
<div class="abs" style="left:2873.5px;top:592px;width:15.5px;height:932px;background:#93a1a8;border-radius:8px 8px 8px 8px"></div>
<div class="abs" style="left:2875px;top:593px;width:13px;height:53px;background:#3f4c55;border-radius:7px"></div>
<div class="abs" style="left:982px;top:1525px;width:1891px;height:20px;box-sizing:border-box;background:#3e4c56;border:2.5px solid #9aa7ad;border-radius:10px"></div>
<svg class="abs" style="left:2692px;top:1601px" width="42" height="42" viewBox="0 0 42 42"><circle cx="20.7" cy="20.6" r="19.6" fill="#fff"/><rect x="10.6" y="10.6" width="20.1" height="4.6" rx="2.3" fill="#f9a61a"/><rect x="10.6" y="18.4" width="12.4" height="4.6" rx="2.3" fill="#f9a61a"/><circle cx="28.5" cy="20.7" r="2.6" fill="#4a8cf0"/><circle cx="13" cy="28.8" r="2.6" fill="#f9a61a"/><rect x="18" y="26.4" width="13" height="5" rx="2.5" fill="#2ecc5e"/></svg>
<svg class="abs" style="left:0;top:0" width="3000" height="1721" viewBox="0 0 3000 1721"><g fill="#fdb515"><path d="M2748.94,1641 V1614 C2748.94,1606.5 2753.5,1602 2761.07,1602 V1609.5 C2759,1609.5 2757.45,1611 2757.45,1614.5 V1641 Z"/><rect x="2743" y="1614" width="18.07" height="7.2"/><rect x="2765.54" y="1602" width="8.52" height="39"/><rect x="2841.07" y="1602" width="8.94" height="39"/><rect x="2835.5" y="1614" width="20.26" height="7.2"/><polygon points="2857.7,1614 2866.8,1614 2871.5,1629.1 2877,1614 2886.2,1614 2870.9,1658 2861.7,1658 2867.7,1641"/><path d="M2888.1,1641 V1614 H2897.05 V1615.5 C2900,1613 2904.5,1612.5 2909,1615.9 L2904.3,1622.05 C2901.5,1620.5 2897.05,1621 2897.05,1626 V1641 Z"/></g><path fill="#fdb515" fill-rule="evenodd" d="M2777.90,1627.5 a13.6,13.95 0 1 0 27.2,0 a13.6,13.95 0 1 0 -27.2,0 Z M2785.80,1627.5 a5.7,7.4 0 1 0 11.4,0 a5.7,7.4 0 1 0 -11.4,0 Z"/><rect x="2785.50" y="1624.8" width="19.6" height="5.55" fill="#fdb515"/><polygon fill="#1f303e" points="2791.50,1630.35 2807.50,1630.35 2807.50,1640.6 2798.30,1631.8 2791.50,1631.8"/><path fill="#fdb515" fill-rule="evenodd" d="M2807.05,1627.5 a13.6,13.95 0 1 0 27.2,0 a13.6,13.95 0 1 0 -27.2,0 Z M2814.95,1627.5 a5.7,7.4 0 1 0 11.4,0 a5.7,7.4 0 1 0 -11.4,0 Z"/><rect x="2814.65" y="1624.8" width="19.6" height="5.55" fill="#fdb515"/><polygon fill="#1f303e" points="2820.65,1630.35 2836.65,1630.35 2836.65,1640.6 2827.45,1631.8 2820.65,1631.8"/></svg>
</div></body></html>
